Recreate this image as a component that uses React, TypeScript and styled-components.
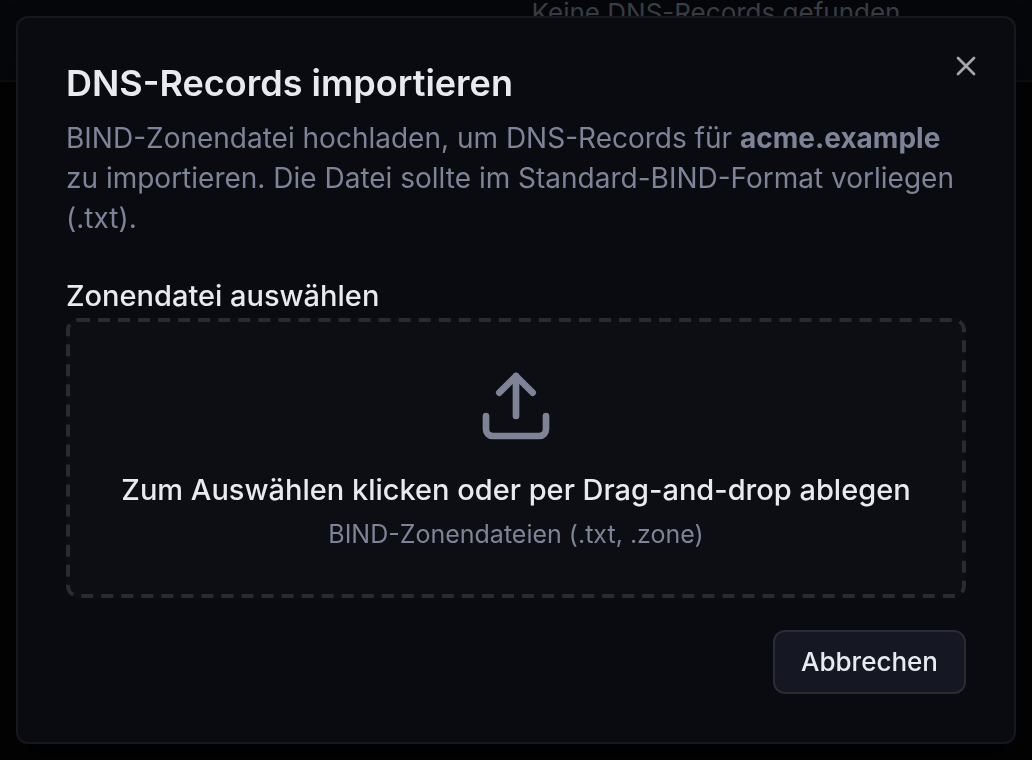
import React, { useRef } from "react";
import styled, { createGlobalStyle } from "styled-components";
import { Upload, X } from "lucide-react";

const GlobalStyle = createGlobalStyle`
  *, *::before, *::after { box-sizing: border-box; }
  body {
    margin: 0;
    background: #030304;
    color: #e8eaf0;
    font-family: Inter, "Liberation Sans", sans-serif;
    overflow: hidden;
  }
  h2, p { margin: 0; }
  button { font: inherit; color: inherit; cursor: pointer; }
`;

const Page = styled.main`
  min-height: 100vh;
`;

const RecordsPanel = styled.section`
  height: 82px;
  padding-left: 400px;
  border-bottom: 2px solid #0f0f12;
  background: #06070b;
`;

const EmptyText = styled.p`
  color: #3b3e45;
  font-size: 26px;
  line-height: 26px;
  text-align: center;
`;

const Overlay = styled.div`
  position: fixed;
  inset: 0;
  display: flex;
  align-items: center;
  padding: 16px;
`;

const Dialog = styled.div`
  position: relative;
  width: 100%;
  padding: 48px;
  border: 2px solid #17181e;
  border-radius: 12px;
  background: #0a0b10;
  box-shadow: 0 20px 30px rgba(0, 0, 0, 0.5);
`;

const CloseButton = styled.button`
  position: absolute;
  top: 32px;
  right: 32px;
  display: flex;
  padding: 0;
  border: 0;
  background: none;
  color: #a6a7ab;
`;

const Header = styled.header`
  display: flex;
  flex-direction: column;
  gap: 18px;
`;

const Title = styled.h2`
  font-size: 36px;
  font-weight: 600;
  line-height: 34px;
`;

const Description = styled.p`
  color: #7e8398;
  font-size: 28px;
  line-height: 40px;
`;

const Field = styled.div`
  display: flex;
  flex-direction: column;
  margin-top: 36px;
`;

const FieldLabel = styled.label`
  font-size: 29px;
  font-weight: 500;
  line-height: 44px;
`;

const DropZone = styled.button`
  position: relative;
  display: flex;
  flex-direction: column;
  align-items: center;
  padding: 48px 24px;
  border: 0;
  border-radius: 12px;
  background: #0d0e13;
`;

const DashedOutline = styled.svg`
  position: absolute;
  inset: 0;
  width: 100%;
  height: 100%;

  rect {
    width: calc(100% - 4px);
    height: calc(100% - 4px);
    fill: none;
    stroke: #2a2a33;
    stroke-width: 4px;
    stroke-dasharray: 12 8.04;
  }
`;

const DropTitle = styled.span`
  margin-top: 24px;
  font-size: 29px;
  font-weight: 500;
  line-height: 40px;
`;

const DropHint = styled.span`
  margin-top: 8px;
  color: #7e8398;
  font-size: 25px;
  line-height: 32px;
`;

const Footer = styled.footer`
  display: flex;
  justify-content: flex-end;
  margin-top: 32px;
`;

const CancelButton = styled.button`
  height: 64px;
  padding: 0 26px;
  border: 2px solid #2a2b35;
  border-radius: 12px;
  background: #151722;
  font-size: 26px;
  font-weight: 500;
  line-height: 40px;
`;

export default function App() {
  const fileInput = useRef<HTMLInputElement>(null);

  return (
    <>
      <GlobalStyle />
      <Page>
        <RecordsPanel>
          <EmptyText>Keine DNS-Records gefunden</EmptyText>
        </RecordsPanel>
      </Page>
      <Overlay>
        <Dialog role="dialog" aria-modal="true" aria-labelledby="import-title" aria-describedby="import-text">
          <Header>
            <Title id="import-title">DNS-Records importieren</Title>
            <Description id="import-text">
              BIND-Zonendatei hochladen, um DNS-Records für <strong>acme.example</strong> zu importieren. Die Datei
              sollte im Standard-BIND-Format vorliegen (.txt).
            </Description>
          </Header>
          <Field>
            <FieldLabel htmlFor="zone-file">Zonendatei auswählen</FieldLabel>
            <input ref={fileInput} id="zone-file" type="file" accept=".txt,.zone" hidden />
            <DropZone type="button" onClick={() => fileInput.current?.click()}>
              <DashedOutline aria-hidden="true">
                <rect x="2" y="2" rx="10" />
              </DashedOutline>
              <Upload size={80} color="#7e8398" aria-hidden="true" />
              <DropTitle>Zum Auswählen klicken oder per Drag-and-drop ablegen</DropTitle>
              <DropHint>BIND-Zonendateien (.txt, .zone)</DropHint>
            </DropZone>
          </Field>
          <Footer>
            <CancelButton type="button">Abbrechen</CancelButton>
          </Footer>
          <CloseButton type="button" aria-label="Schließen">
            <X size={32} aria-hidden="true" />
          </CloseButton>
        </Dialog>
      </Overlay>
    </>
  );
}
